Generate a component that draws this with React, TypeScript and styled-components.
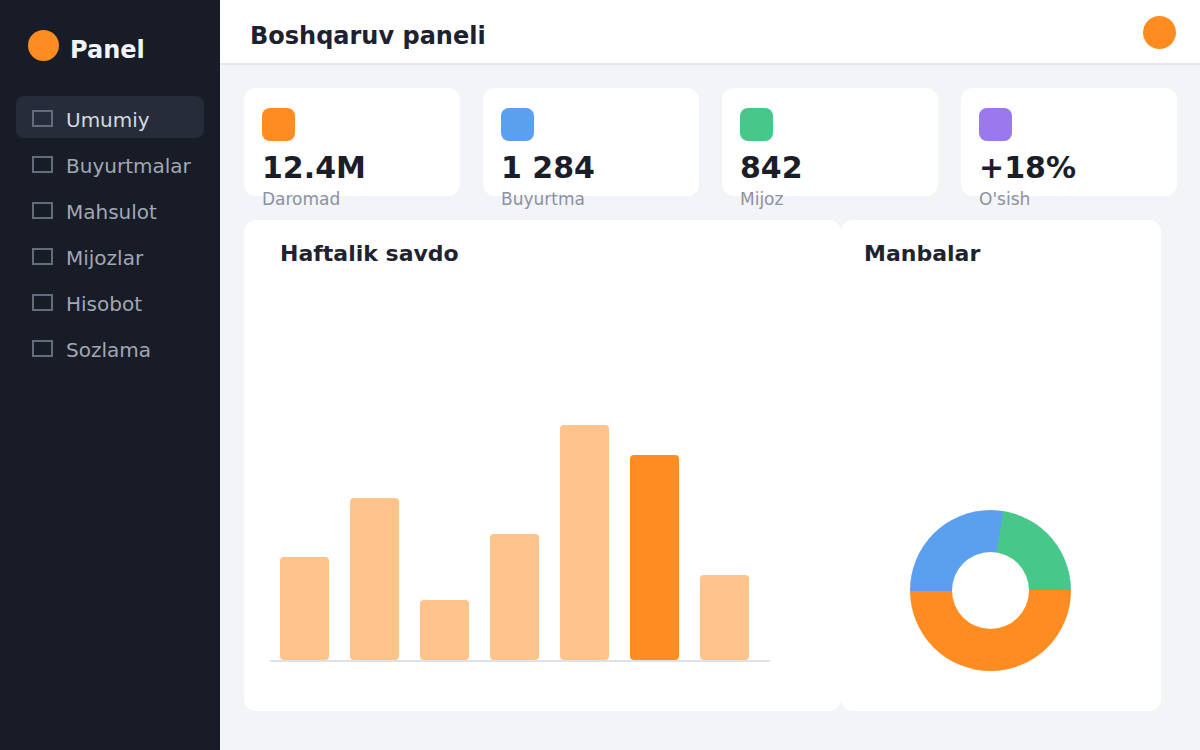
import styled, { createGlobalStyle } from "styled-components";

const GlobalStyle = createGlobalStyle`
  * { box-sizing: border-box; }
  html, body {
    margin: 0;
    padding: 0;
    background: #f3f4f7;
    font-family: "DejaVu Sans", Verdana, sans-serif;
  }
`;

const StyledLayout = styled.div`
  display: flex;
  width: 1200px;
  height: 750px;
  overflow: hidden;
`;

const StyledSidebar = styled.aside`
  width: 220px;
  flex-shrink: 0;
  background-color: #181c27;
  padding: 29px 16px 0 16px;
`;

const StyledLogo = styled.div`
  display: flex;
  align-items: center;
  gap: 11px;
  padding-left: 12px;
  margin-bottom: 34px;
`;

const StyledLogoDot = styled.span`
  width: 31px;
  height: 31px;
  border-radius: 50%;
  background-color: #ff8c20;
`;

const StyledLogoText = styled.span`
  color: #f3f4f6;
  font-size: 24px;
  font-weight: bold;
  line-height: 1;
  padding-top: 9px;
`;

const StyledNav = styled.nav`
  display: flex;
  flex-direction: column;
  gap: 4px;
`;

const StyledNavItem = styled.div<{ $active?: boolean }>`
  display: flex;
  align-items: center;
  gap: 13px;
  height: 42px;
  padding: 6px 16px 0 16px;
  border-radius: 8px;
  font-size: 20px;
  color: ${(p) => (p.$active ? "#d5d9e1" : "#a1a7b4")};
  background-color: ${(p) => (p.$active ? "#272c3a" : "transparent")};
`;

const StyledNavIcon = styled.span`
  width: 21px;
  height: 17px;
  border: 2px solid #646b7a;
  flex-shrink: 0;
  margin-top: -3px;
`;

const StyledMain = styled.div`
  flex: 1;
  display: flex;
  flex-direction: column;
`;

const StyledHeader = styled.header`
  height: 65px;
  flex-shrink: 0;
  display: flex;
  align-items: center;
  justify-content: space-between;
  padding: 8px 24px 0 30px;
  background-color: #ffffff;
  border-bottom: 2px solid #e3e6eb;
`;

const StyledTitle = styled.h1`
  margin: 0;
  font-size: 24px;
  font-weight: bold;
  color: #1d2130;
`;

const StyledAvatar = styled.span`
  width: 33px;
  height: 33px;
  border-radius: 50%;
  background-color: #ff8c20;
  margin-top: -6px;
`;

const StyledContent = styled.div`
  padding: 23px 23px 0 24px;
  display: flex;
  flex-direction: column;
  gap: 24px;
`;

const StyledStats = styled.div`
  display: grid;
  grid-template-columns: repeat(4, 1fr);
  gap: 23px;
`;

const StyledStatCard = styled.div`
  height: 108px;
  background-color: #ffffff;
  border-radius: 12px;
  padding: 20px 18px 0 18px;
`;

const StyledStatIcon = styled.div<{ $color: string }>`
  width: 33px;
  height: 33px;
  border-radius: 8px;
  background-color: ${(p) => p.$color};
  margin-bottom: 9px;
`;

const StyledStatValue = styled.div`
  font-size: 30px;
  font-weight: bold;
  line-height: 36px;
  color: #1b1e29;
`;

const StyledStatLabel = styled.div`
  font-size: 17px;
  line-height: 20px;
  margin-top: 3px;
  color: #8b92a0;
`;

const StyledChartRow = styled.div`
  display: grid;
  grid-template-columns: 597px 320px;
  height: 491px;
`;

const StyledCard = styled.section<{ $padLeft: number }>`
  background-color: #ffffff;
  border-radius: 12px;
  display: flex;
  flex-direction: column;
  padding: 21px 24px 0 ${(p) => p.$padLeft}px;
`;

const StyledCardTitle = styled.h2<{ $indent?: number }>`
  margin: 0;
  font-size: 22px;
  line-height: 26px;
  font-weight: bold;
  color: #1f2330;
  padding-left: ${(p) => p.$indent ?? 0}px;
`;

const StyledBars = styled.div`
  flex: 1;
  width: 500px;
  display: flex;
  align-items: flex-end;
  gap: 21px;
  padding-left: 10px;
  border-bottom: 2px solid #dde1e8;
  margin-bottom: 49px;
`;

const StyledBar = styled.div<{ $h: number; $hot?: boolean }>`
  width: 49px;
  height: ${(p) => p.$h}px;
  border-radius: 4px;
  background-color: ${(p) => (p.$hot ? "#ff8c20" : "#fec48b")};
`;

const StyledDonutWrap = styled.div`
  flex: 1;
  display: flex;
  align-items: flex-end;
  padding: 0 0 40px 46px;
`;

const StyledDonut = styled.div`
  width: 161px;
  height: 161px;
  border-radius: 50%;
  background: conic-gradient(
    from 90deg,
    #ff8c20 0 50%,
    #5b9fef 50% 77.5%,
    #47c88a 77.5% 100%
  );
  display: flex;
  align-items: center;
  justify-content: center;
`;

const StyledDonutHole = styled.div`
  width: 77px;
  height: 77px;
  border-radius: 50%;
  background-color: #ffffff;
`;

const navItems = ["Umumiy", "Buyurtmalar", "Mahsulot", "Mijozlar", "Hisobot", "Sozlama"];

const stats = [
  { color: "#ff8c20", value: "12.4M", label: "Daromad" },
  { color: "#5b9fef", value: "1 284", label: "Buyurtma" },
  { color: "#47c88a", value: "842", label: "Mijoz" },
  { color: "#9a78ee", value: "+18%", label: "O'sish" },
];

const bars = [103, 162, 60, 126, 235, 205, 85];

export default function App() {
  return (
    <>
      <GlobalStyle />
      <StyledLayout>
        <StyledSidebar>
          <StyledLogo>
            <StyledLogoDot />
            <StyledLogoText>Panel</StyledLogoText>
          </StyledLogo>
          <StyledNav>
            {navItems.map((item, key) => (
              <StyledNavItem key={key} $active={key === 0}>
                <StyledNavIcon />
                {item}
              </StyledNavItem>
            ))}
          </StyledNav>
        </StyledSidebar>

        <StyledMain>
          <StyledHeader>
            <StyledTitle>Boshqaruv paneli</StyledTitle>
            <StyledAvatar />
          </StyledHeader>

          <StyledContent>
            <StyledStats>
              {stats.map((stat, key) => (
                <StyledStatCard key={key}>
                  <StyledStatIcon $color={stat.color} />
                  <StyledStatValue>{stat.value}</StyledStatValue>
                  <StyledStatLabel>{stat.label}</StyledStatLabel>
                </StyledStatCard>
              ))}
            </StyledStats>

            <StyledChartRow>
              <StyledCard $padLeft={26}>
                <StyledCardTitle $indent={10}>Haftalik savdo</StyledCardTitle>
                <StyledBars>
                  {bars.map((h, key) => (
                    <StyledBar key={key} $h={h} $hot={key === 5} />
                  ))}
                </StyledBars>
              </StyledCard>
              <StyledCard $padLeft={23}>
                <StyledCardTitle>Manbalar</StyledCardTitle>
                <StyledDonutWrap>
                  <StyledDonut>
                    <StyledDonutHole />
                  </StyledDonut>
                </StyledDonutWrap>
              </StyledCard>
            </StyledChartRow>
          </StyledContent>
        </StyledMain>
      </StyledLayout>
    </>
  );
}
